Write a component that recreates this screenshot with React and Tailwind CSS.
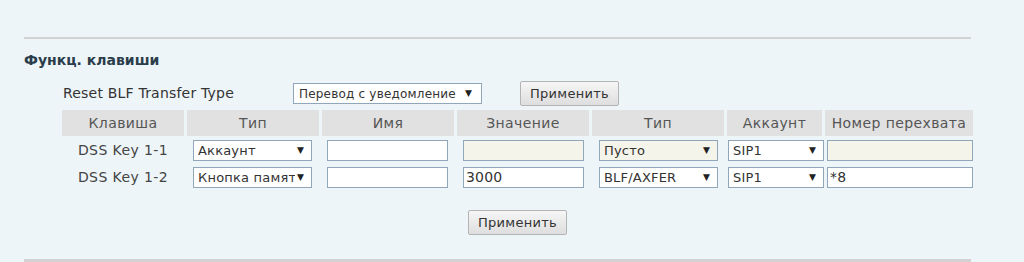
import React from "react";

const font = { fontFamily: '"DejaVu Sans", Verdana, sans-serif' };

function Select({ value, w, disabled }) {
  return (
    <div
      className={`flex h-[21px] items-center border border-[#8fa6bb] pl-[4px] pr-[7px] text-[13px] tracking-[0.2px] text-[#333] ${w} ${
        disabled ? "bg-[#f5f4ea]" : "bg-white"
      }`}
    >
      <span className="flex-1 overflow-hidden whitespace-nowrap">{value}</span>
      <span className="ml-[2px] text-[9px] text-[#222]">▼</span>
    </div>
  );
}

function Input({ value, w, disabled }) {
  return (
    <div
      className={`flex h-[21px] items-center border border-[#8fa6bb] pl-[2px] text-[14px] tracking-[0.2px] text-[#333] ${w} ${
        disabled ? "bg-[#f5f4ea]" : "bg-white"
      }`}
    >
      {value}
    </div>
  );
}

function Button() {
  return (
    <button className="h-[25px] w-[99px] rounded-[2px] border border-[#b4b4b4] bg-gradient-to-b from-[#f6f6f6] to-[#dedede] text-[13px] tracking-[0.3px] text-[#333]">
      Применить
    </button>
  );
}

const heads = ["Клавиша", "Тип", "Имя", "Значение", "Тип", "Аккаунт", "Номер перехвата"];

const rows = [
  { key: "DSS Key 1-1", type: "Аккаунт", name: "", value: "", valueOff: true, t2: "Пусто", t2Off: true, acc: "SIP1", pick: "", pickOff: true },
  { key: "DSS Key 1-2", type: "Кнопка памяти", name: "", value: "3000", valueOff: false, t2: "BLF/AXFER", t2Off: false, acc: "SIP1", pick: "*8", pickOff: false },
];

const cols = "grid grid-cols-[122px_132px_132px_132px_132px_95px_148px] gap-x-[3px]";

export default function App() {
  return (
    <div className="h-[262px] w-[1024px] overflow-hidden bg-[#eef5f8]" style={font}>
      <div className="ml-[24px] w-[947px] pt-[37px]">
        <div className="h-[2px] bg-[#d2d2d2]" />
        <div className="mt-[13px] text-[14px] font-bold leading-[16px] text-[#2b3d4b]">Функц. клавиши</div>
        <div className="mt-[13px] flex h-[25px] items-center pl-[39px] text-[14px] tracking-[0.2px] text-[#333]">
          <span className="w-[230px] whitespace-nowrap">Reset BLF Transfer Type</span>
          <div className="flex h-[21px] w-[189px] items-center border border-[#8fa6bb] bg-white pl-[5px] pr-[9px] text-[12px]">
            <span className="flex-1 whitespace-nowrap">Перевод с уведомление</span>
            <span className="ml-[4px] text-[9px] text-[#222]">▼</span>
          </div>
          <div className="ml-[38px]">
            <Button />
          </div>
        </div>

        <div className="ml-[38px] mt-[4px] w-[911px]">
          <div className={`${cols} mb-[1px]`}>
            {heads.map((h, i) => (
              <div key={i} className="flex h-[26px] items-center justify-center whitespace-nowrap bg-[#e1e1e1] text-[14px] tracking-[0.4px] text-[#555]">
                {h}
              </div>
            ))}
          </div>
          {rows.map((r) => (
            <div key={r.key} className={`${cols} h-[27px] items-center`}>
              <div className="text-center text-[14px] tracking-[0.4px] text-[#444]">{r.key}</div>
              <div className="pl-[6px]">
                <Select value={r.type} w="w-[119px]" />
              </div>
              <div className="pl-[5px]">
                <Input value={r.name} w="w-[121px]" />
              </div>
              <div className="pl-[6px]">
                <Input value={r.value} w="w-[121px]" disabled={r.valueOff} />
              </div>
              <div className="pl-[7px]">
                <Select value={r.t2} w="w-[119px]" disabled={r.t2Off} />
              </div>
              <div className="pl-[1px]">
                <Select value={r.acc} w="w-[96px]" />
              </div>
              <div className="pl-[2px]">
                <Input value={r.pick} w="w-[146px]" disabled={r.pickOff} />
              </div>
            </div>
          ))}
          <div className="mt-[19px] flex justify-center">
            <Button />
          </div>
        </div>
        <div className="mt-[24px] h-[3px] bg-[#d2d2d2]" />
      </div>
    </div>
  );
}
